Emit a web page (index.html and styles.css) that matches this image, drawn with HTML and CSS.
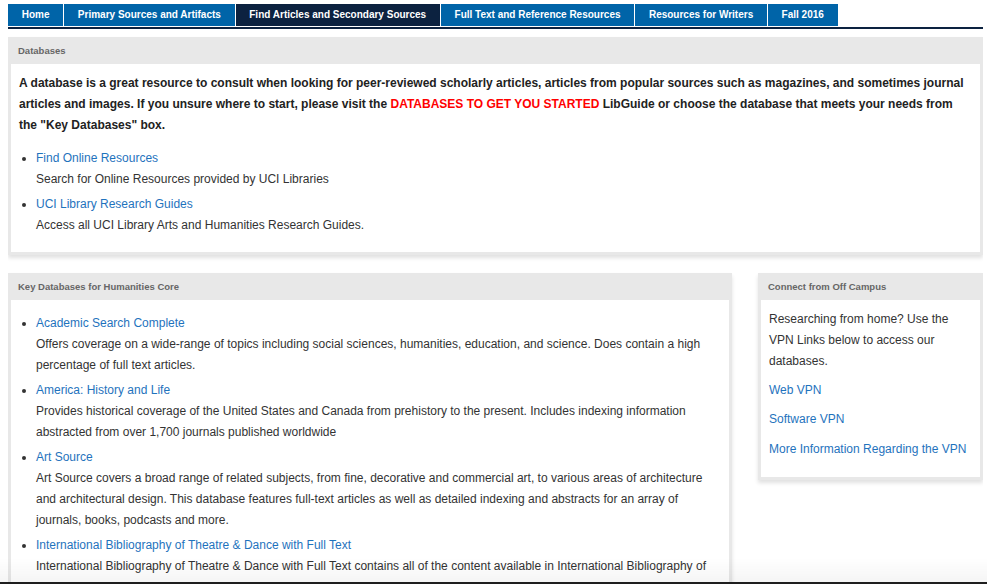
FILE: index.html
```html
<!DOCTYPE html>
<html lang="en">
<head>
<meta charset="utf-8">
<title>Find Articles and Secondary Sources</title>
<link rel="stylesheet" href="styles.css">
</head>
<body>
<nav class="tabs">
  <a class="tab" href="#">Home</a>
  <a class="tab" href="#">Primary Sources and Artifacts</a>
  <a class="tab active" href="#">Find Articles and Secondary Sources</a>
  <a class="tab" href="#">Full Text and Reference Resources</a>
  <a class="tab" href="#">Resources for Writers</a>
  <a class="tab" href="#">Fall 2016</a>
</nav>

<section class="panel panel-top">
  <h2 class="panel-head">Databases</h2>
  <div class="panel-body">
    <p class="lead">A database is a great resource to consult when looking for peer-reviewed scholarly articles, articles from popular sources such as magazines, and sometimes journal articles and images. If you unsure where to start, please visit the <span class="red">DATABASES TO GET YOU STARTED</span> LibGuide or choose the database that meets your needs from the "Key Databases" box.</p>
    <ul class="links">
      <li><a href="#">Find Online Resources</a><div class="desc">Search for Online Resources provided by UCI Libraries</div></li>
      <li><a href="#">UCI Library Research Guides</a><div class="desc">Access all UCI Library Arts and Humanities Research Guides.</div></li>
    </ul>
  </div>
</section>

<div class="columns">
  <section class="panel">
    <h2 class="panel-head">Key Databases for Humanities Core</h2>
    <div class="panel-body body-list">
      <ul class="links">
        <li><a href="#">Academic Search Complete</a><div class="desc">Offers coverage on a wide-range of topics including social sciences, humanities, education, and science. Does contain a high percentage of full text articles.</div></li>
        <li><a href="#">America: History and Life</a><div class="desc">Provides historical coverage of the United States and Canada from prehistory to the present. Includes indexing information abstracted from over 1,700 journals published worldwide</div></li>
        <li><a href="#">Art Source</a><div class="desc">Art Source covers a broad range of related subjects, from fine, decorative and commercial art, to various areas of architecture and architectural design. This database features full-text articles as well as detailed indexing and abstracts for an array of journals, books, podcasts and more.</div></li>
        <li><a href="#">International Bibliography of Theatre &amp; Dance with Full Text</a><div class="desc">International Bibliography of Theatre &amp; Dance with Full Text contains all of the content available in International Bibliography of Theatre &amp; Dance, as well as full text for 100 titles.</div></li>
      </ul>
    </div>
  </section>
  <section class="panel panel-side">
    <h2 class="panel-head">Connect from Off Campus</h2>
    <div class="panel-body">
      <p>Researching from home? Use the VPN Links below to access our databases.</p>
      <p><a href="#">Web VPN</a></p>
      <p><a href="#">Software VPN</a></p>
      <p><a href="#">More Information Regarding the VPN</a></p>
    </div>
  </section>
</div>

<div class="bottom-edge"></div>
</body>
</html>
```
FILE: styles.css
```css
html {
  overflow: hidden;
}
body {
  margin: 4px 4px 0 8px;
  font-family: "Liberation Sans", Arial, Helvetica, sans-serif;
  font-size: 12px;
  line-height: 21px;
  color: #333;
  background: #fff;
}
a {
  color: #1f73bd;
  text-decoration: none;
}
.tabs {
  display: flex;
  gap: 1px;
  border-bottom: 2px solid #0c2240;
  padding-bottom: 1px;
}
.tab {
  display: block;
  background: #0064a8;
  color: #fff;
  font-size: 10px;
  font-weight: bold;
  line-height: 22px;
  padding: 0 13.7px;
}
.tab.active {
  background: #0c2240;
}
.panel {
  background: #e8e8e8;
  padding: 0 3px 3px;
  box-shadow: 0 3px 4px rgba(0, 0, 0, 0.12);
}
.panel-top {
  margin-top: 8px;
}
.panel-head {
  margin: 0;
  font-size: 9.5px;
  font-weight: bold;
  color: #666;
  line-height: 27px;
  padding-left: 7px;
}
.panel-body {
  background: #fff;
  padding: 9px 8px 16px;
}
.panel-body p {
  margin: 0 0 8px;
}
.lead {
  font-weight: bold;
  color: #222;
}
.panel-body .lead {
  margin: 0 0 12px;
}
.red {
  color: #ff0000;
}
.links {
  margin: 0;
  padding-left: 17px;
}
.links li {
  margin-bottom: 4px;
}
.links li:last-child {
  margin-bottom: 0;
}
.body-list {
  padding-top: 13px;
}
.columns {
  display: grid;
  grid-template-columns: 724px 225px;
  justify-content: space-between;
  align-items: start;
  margin-top: 18px;
}
.panel-side .panel-body {
  padding-bottom: 9px;
}
.panel-side p:last-child {
  margin-top: 9px;
}
.bottom-edge {
  position: fixed;
  left: 0;
  right: 0;
  bottom: 0;
  height: 24px;
  background: linear-gradient(rgba(0, 0, 0, 0), rgba(0, 0, 0, 0.04));
  border-bottom: 2px solid #1e1e1e;
}
```
